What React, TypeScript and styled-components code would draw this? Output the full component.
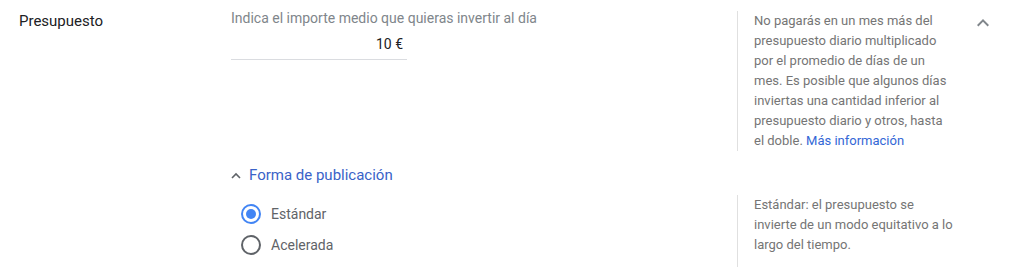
import React, { useState } from 'react';
import styled, { createGlobalStyle } from 'styled-components';

const GlobalStyle = createGlobalStyle`
  html, body {
    margin: 0;
    padding: 0;
    background: #ffffff;
  }
  body {
    font-family: Roboto, 'Noto Sans', 'Liberation Sans', Arial, sans-serif;
    -webkit-font-smoothing: antialiased;
  }
`;

const Section = styled.div`
  display: flex;
  align-items: flex-start;
  width: 1011px;
`;

const Label = styled.div`
  flex: 0 0 231px;
  padding: 11px 0 0 19px;
  box-sizing: border-box;
  font-size: 15px;
  line-height: 20px;
  color: #202124;
`;

const Content = styled.div`
  display: flex;
  flex-direction: column;
  width: 723px;
`;

const Block = styled.div<{ $top: number }>`
  display: flex;
  align-items: flex-start;
  margin-top: ${(p) => p.$top}px;
`;

const Main = styled.div<{ $padTop?: number }>`
  width: 506px;
  padding-top: ${(p) => p.$padTop ?? 0}px;
  box-sizing: border-box;
`;

const Hint = styled.div`
  font-size: 14px;
  line-height: 20px;
  color: #80868b;
`;

const AmountField = styled.div`
  width: 176px;
  margin-top: 6px;
  padding: 0 4px 5px 0;
  box-sizing: border-box;
  border-bottom: 1px solid #dadce0;
  text-align: right;
  font-size: 14px;
  line-height: 20px;
  color: #202124;
`;

const Help = styled.div<{ $top?: number; $bottom?: number }>`
  width: 217px;
  margin-top: ${(p) => p.$top ?? 0}px;
  padding: 0 0 ${(p) => p.$bottom ?? 0}px 16px;
  box-sizing: border-box;
  border-left: 1px solid #e0e0e0;
  font-size: 13px;
  line-height: 20px;
  color: #757575;
`;

const Link = styled.a`
  color: #3367d6;
  text-decoration: none;
  cursor: pointer;
`;

const Toggle = styled.button`
  display: flex;
  align-items: center;
  margin: 14px 0 0;
  padding: 0;
  border: 0;
  background: none;
  font-family: inherit;
  font-size: 15px;
  line-height: 20px;
  color: #3a63c8;
  cursor: pointer;
  svg {
    margin-right: 8px;
  }
`;

const RadioGroup = styled.div`
  display: flex;
  flex-direction: column;
  gap: 1px;
  padding: 4px 0 0 10px;
`;

const RadioRow = styled.label`
  display: flex;
  align-items: center;
  height: 30px;
  cursor: pointer;
  font-size: 14px;
  color: #5f6368;
`;

const Circle = styled.span<{ $checked: boolean }>`
  width: 20px;
  height: 20px;
  box-sizing: border-box;
  border-radius: 50%;
  border: 2px solid ${(p) => (p.$checked ? '#4285f4' : '#5f6368')};
  display: flex;
  align-items: center;
  justify-content: center;
  margin-right: 10px;
  &::after {
    content: '';
    width: 10px;
    height: 10px;
    border-radius: 50%;
    background: ${(p) => (p.$checked ? '#4285f4' : 'transparent')};
  }
`;

const Collapse = styled.div`
  flex: 1;
  display: flex;
  justify-content: center;
  padding: 11px 0 0 0;
  color: #80868b;
`;

const ChevronUp = ({ size }: { size: number }) => (
  <svg width={size} height={size} viewBox="0 0 24 24" fill="currentColor">
    <path d="M12 8l-6 6 1.41 1.41L12 10.83l4.59 4.58L18 14z" />
  </svg>
);

const SmallChevron = () => (
  <svg width="10" height="7" viewBox="0 0 10 7" fill="none">
    <path d="M1 6L5 2l4 4" stroke="#5f6368" strokeWidth="1.6" />
  </svg>
);

const options = ['Estándar', 'Acelerada'];

const App = () => {
  const [delivery, setDelivery] = useState('Estándar');

  return (
    <>
      <GlobalStyle />
      <Section>
        <Label>Presupuesto</Label>
        <Content>
          <Block $top={0}>
            <Main $padTop={8}>
              <Hint>Indica el importe medio que quieras invertir al día</Hint>
              <AmountField>10 €</AmountField>
            </Main>
            <Help $top={11}>
              No pagarás en un mes más del presupuesto diario multiplicado por el
              promedio de días de un mes. Es posible que algunos días inviertas una
              cantidad inferior al presupuesto diario y otros, hasta el doble.{' '}
              <Link>Más información</Link>
            </Help>
          </Block>
          <Toggle>
            <SmallChevron />
            Forma de publicación
          </Toggle>
          <Block $top={10}>
            <Main>
              <RadioGroup>
                {options.map((o) => (
                  <RadioRow key={o} onClick={() => setDelivery(o)}>
                    <Circle $checked={delivery === o} />
                    {o}
                  </RadioRow>
                ))}
              </RadioGroup>
            </Main>
            <Help $bottom={12}>
              Estándar: el presupuesto se invierte de un modo equitativo a lo largo
              del tiempo.
            </Help>
          </Block>
        </Content>
        <Collapse>
          <ChevronUp size={24} />
        </Collapse>
      </Section>
    </>
  );
};

export default App;
